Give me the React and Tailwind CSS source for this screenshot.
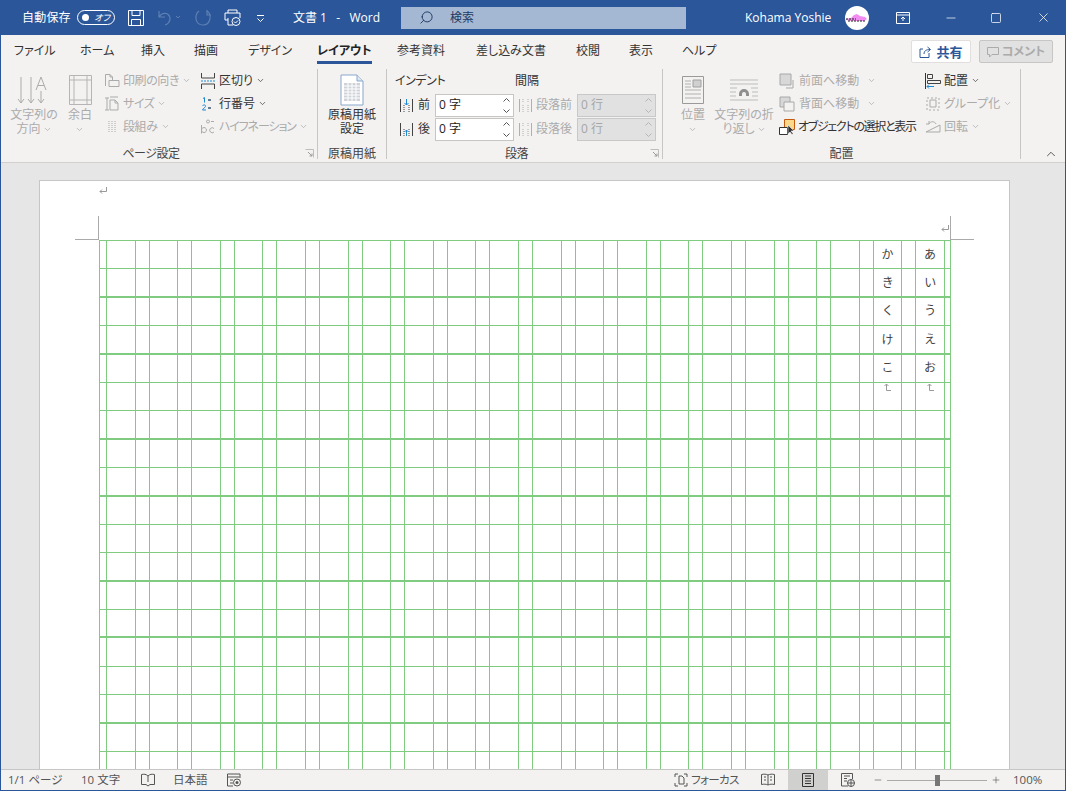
import React from "react";
import { ChevronDown, ChevronUp, Minus, Plus, Search, Square, X } from "lucide-react";

const FONT = "font-['Open_Sans','Noto_Sans_CJK_JP',sans-serif] [font-feature-settings:'palt']";
const THICK_ROWS = [2, 4, 7, 9, 12, 14, 17];
const CHARS = { "37:0": "か", "37:1": "き", "37:2": "く", "37:3": "け", "37:4": "こ", "39:0": "あ", "39:1": "い", "39:2": "う", "39:3": "え", "39:4": "お" };
const TABS = [
  { label: "ファイル", w: "w-[79px]", cls: "pl-[13px]" },
  { label: "ホーム", w: "w-[61px]", cls: "" },
  { label: "挿入", w: "w-[53px]", cls: "" },
  { label: "描画", w: "w-[54px]", cls: "" },
  { label: "デザイン", w: "w-[69px]", cls: "" },
  { label: "レイアウト", w: "w-[80px]", cls: "", active: true },
  { label: "参考資料", w: "w-[79px]", cls: "" },
  { label: "差し込み文書", w: "w-[100px]", cls: "" },
  { label: "校閲", w: "w-[53px]", cls: "" },
  { label: "表示", w: "w-[53px]", cls: "" },
  { label: "ヘルプ", w: "w-[60px]", cls: "" },
];

function Caret({ dim }) {
  return <ChevronDown className={`w-[9px] h-[9px] shrink-0 ${dim ? "text-[#ababab]" : "text-[#444]"}`} strokeWidth={2} />;
}

function Ic({ children, w = 16, h = 16, cls = "" }) {
  return <svg width={w} height={h} viewBox={`0 0 ${w} ${h}`} fill="none" className={`shrink-0 ${cls}`}>{children}</svg>;
}

function SmallBtn({ icon, label, dim, caret = true, gap = "gap-[4px]", cls = "", track = "" }) {
  return (
    <div className={`h-[23px] flex items-center ${gap} ${cls}`}>
      {icon}
      <span className={`whitespace-nowrap ${track} ${dim ? "text-[#ababab]" : "text-[#333]"}`}>{label}</span>
      {caret && <Caret dim={dim} />}
    </div>
  );
}

function BigBtn({ icon, lines, w, caretLine, dim = true, cls = "" }) {
  return (
    <div className={`flex flex-col items-center shrink-0 pt-[3px] ${w} ${cls}`}>
      <div className="h-[36px] flex items-center justify-center">{icon}</div>
      <div className={`text-center leading-[14px] ${dim ? "text-[#ababab]" : "text-[#333]"}`}>
        {lines.map((l, i) => (
          <div key={i} className="flex items-center justify-center gap-[2px] h-[14px] whitespace-nowrap">
            {l}{caretLine === i && <Caret dim={dim} />}
          </div>
        ))}
      </div>
    </div>
  );
}

function Launcher() {
  return (
    <Ic w={9} h={9}>
      <path d="M.5 .5h8v8" stroke="#bdbdbd" /><path d="M3 3l4 4M7 4.500V7H4.500" stroke="#9a9a9a" />
    </Ic>
  );
}

function Group({ w, label, children, launcher }) {
  return (
    <div className={`relative shrink-0 h-[90px] mt-[1px] flex flex-col border-r border-[#c8c6c4] ${w}`}>
      <div className="flex h-[76px] shrink-0">{children}</div>
      <div className={`flex items-center h-[17px] shrink-0 text-[#444] ${launcher ? "pr-[16px] tracking-[-0.5px]" : ""}`}>
        <span className="flex-1 text-center">{label}</span>
        {launcher && <div className="absolute right-[3px] bottom-[1px]"><Launcher /></div>}
      </div>
    </div>
  );
}

function Spin({ value, unit, dim }) {
  const c = dim ? "#b5b5b5" : "#555";
  return (
    <div className={`w-[79px] h-[23px] shrink-0 border flex items-center justify-between pl-[2px] pr-[3px] ${dim ? "bg-[#e1e1e1] border-[#c8c8c8] text-[#a6a6a6]" : "bg-white border-[#c8c6c4] text-[#222]"}`}>
      <span className="pl-[1px]">{value}&nbsp;{unit}</span>
      <Ic w={7} h={17}>
        <path d="M.5 4.500l3-3 3 3M.5 12.500l3 3 3-3" stroke={c} />
      </Ic>
    </div>
  );
}

function IndentIcon({ flip, dim }) {
  const c = dim ? "#b0b0b0" : "#444";
  const a = dim ? "#b0b0b0" : "#1e88d2";
  return (
    <Ic w={15} h={15}>
      <path d="M1.500 1v13M13.500 1v13" stroke={c} />
      {dim ? (
        <path d="M5 7v7M10 7v7M5 1v3M10 1v3" stroke={c} strokeDasharray="1 1" />
      ) : (
        <>
          <path d="M5 7v7M10 7v7" stroke={c} strokeDasharray="1 1" />
          {flip ? <path d="M7.500 14V8M5.500 10l2-2 2 2" stroke={a} /> : <path d="M7.500 1v6M5.500 5l2 2 2-2" stroke={a} />}
        </>
      )}
    </Ic>
  );
}

function TitleBar() {
  return (
    <div className="h-[35px] bg-[#2b579a] flex items-center text-white shrink-0">
      <span className="ml-[21px] w-[48px] whitespace-nowrap tracking-[0.2px]">自動保存</span>
      <div className="ml-[7px] w-[38px] h-[15px] rounded-full border border-white flex items-center justify-between pl-[4px] pr-[4px]">
        <span className="w-[7px] h-[7px] rounded-full bg-white" />
        <span className="text-[9px] leading-none italic">オフ</span>
      </div>
      <Ic w={16} h={16} cls="ml-[13px]">
        <path d="M.5 .5h15v15H.5zM4 .5v5h8v-5M3.500 15.500v-6h9v6" stroke="white" />
      </Ic>
      <Ic w={24} h={16} cls="ml-[13px] opacity-40">
        <path d="M2 1v6h6M2 7c3-5 10-5 11 1 .5 4-3 6.500-5 7" stroke="#a9bcd8" strokeWidth="1.2" />
        <path d="M19 6l2 2 2-2" stroke="#a9bcd8" />
      </Ic>
      <Ic w={18} h={17} cls="ml-[13px] opacity-40">
        <path d="M13 2c5 3 4 14-4 14S0 6 5 2M13 1v5h4" stroke="#a9bcd8" strokeWidth="1.2" />
      </Ic>
      <Ic w={17} h={17} cls="ml-[12px]">
        <path d="M4 4V1h9v3M4 11H1V4h15v5M4 9v7h5" stroke="white" />
        <circle cx="12" cy="12.500" r="4" fill="#2b579a" stroke="white" />
        <path d="M10 12.500l1.500 1.500 2.500-2.500" stroke="white" />
      </Ic>
      <Ic w={9} h={8} cls="ml-[15px]">
        <path d="M1 1.500h7M1.500 4.500l3 3 3-3" stroke="white" />
      </Ic>
      <span className="ml-[28px] w-[100px] whitespace-nowrap">文書 1&nbsp;&nbsp; -&nbsp;&nbsp; Word</span>
      <div className="ml-[8px] w-[285px] h-[22px] bg-[#a4b8d3] flex items-center text-[#1f3a63]">
        <Search className="ml-[18px] w-[15px] h-[15px] -scale-x-100 text-[#1f3a63]" strokeWidth={1.5} />
        <span className="ml-[16px]">検索</span>
      </div>
      <span className="ml-[59px] w-[100px] whitespace-nowrap">Kohama Yoshie</span>
      <div className="w-[24px] h-[24px] rounded-full bg-white flex items-center justify-center">
        <Ic w={24} h={10}>
          <path d="M1 6l5-1 3-3 3-1 3 2 5 1 2 2-3 2H6L1 7z" fill="#f28cf0" />
          <path d="M1 6h10M3 8h18" stroke="#222" strokeDasharray="2 1" />
        </Ic>
      </div>
      <Ic w={14} h={12} cls="ml-[27px]">
        <path d="M.5 .5h13v11H.5zM.5 3h13M7 9V5M5 7l2-2 2 2" stroke="white" />
      </Ic>
      <Minus className="ml-[34px] w-[14px] h-[14px]" strokeWidth={1.2} />
      <Square className="ml-[32px] w-[12px] h-[12px]" strokeWidth={1.5} />
      <X className="ml-[34px] w-[15px] h-[15px]" strokeWidth={1.2} />
    </div>
  );
}

function TabRow() {
  return (
    <div className="h-[33px] flex items-center shrink-0">
      {TABS.map((t) => (
        <div key={t.label} className={`${t.w} ${t.cls} h-full flex items-center pb-[2px] shrink-0`}>
          <span className={`relative whitespace-nowrap ${t.active ? "font-bold text-[#222]" : "text-[#333]"}`}>
            {t.label}
            {t.active && <span className="absolute left-0 right-0 top-[18px] h-[3px] bg-[#2b579a]" />}
          </span>
        </div>
      ))}
      <div className="ml-[169px] w-[60px] h-[23px] shrink-0 bg-white border border-[#e1dfdd] rounded-[2px] flex items-center justify-center gap-[5px]">
        <Ic w={12} h={12}>
          <path d="M10 7v4.500H1V3h3M5 8c0-3 2-4.500 6-4.500M8.500 1l3 2.500-3 2.500" stroke="#2b579a" />
        </Ic>
        <span className="font-bold text-[#2b579a] text-[13px]">共有</span>
      </div>
      <div className="ml-[8px] w-[74px] h-[23px] shrink-0 bg-[#e1e1e1] border border-[#c8c6c4] rounded-[2px] flex items-center justify-center gap-[3px] text-[#ababab]">
        <Ic w={12} h={12}>
          <path d="M.5 1.500h11v7H5L2.500 11V8.500H.5z" stroke="#ababab" />
        </Ic>
        <span className="font-bold">コメント</span>
      </div>
    </div>
  );
}

function Ribbon() {
  const g = "#ababab";
  return (
    <div className="h-[95px] flex shrink-0 border-b border-[#d2d0ce] relative">
      <Group w="w-[317px]" label="ページ設定" launcher>
        <BigBtn w="w-[46px]" cls="ml-[10px]" lines={["文字列の", "方向"]} caretLine={1} icon={
          <Ic w={34} h={30}>
            <path d="M4 2v26M1 24l3 4 3-4M14 2v26M11 24l3 4 3-4M24 16v12M21 24l3 4 3-4" stroke={g} />
            <path d="M19 15l5-13 5 13M21 10.500h6" stroke={g} />
          </Ic>
        } />
        <BigBtn w="w-[26px]" cls="ml-[10px]" lines={["余白", ""]} caretLine={1} icon={
          <Ic w={23} h={30}>
            <path d="M.5 .5h22v29H.5zM5 .5v29M18 .5v29M.5 5h22M.5 25h22" stroke="#b5b5b5" />
          </Ic>
        } />
        <div className="ml-[11px] w-[96px] shrink-0 flex flex-col">
          <SmallBtn dim gap="gap-[3px]" track="tracking-[-0.4px]" label="印刷の向き" icon={<Ic><path d="M1.500 13V1.500H6L8.500 4v3M6 1.500V4h2.500M5 7.500h10v6H5z" stroke={g} /></Ic>} />
          <SmallBtn dim gap="gap-[3px]" track="tracking-[-0.4px]" label="サイズ" icon={<Ic><path d="M1 2h4M3 2v12M1 14h4M6 14V4h5l3 3v7zM11 4v3h3M6 1h8" stroke={g} /></Ic>} />
          <SmallBtn dim gap="gap-[3px]" track="tracking-[-0.4px]" label="段組み" icon={<Ic><path d="M5 2v11M8 2v11M11 2v11" stroke={g} strokeDasharray="1 1" /></Ic>} />
        </div>
        <div className="flex flex-col shrink-0">
          <SmallBtn gap="gap-[3px]" label="区切り" icon={
            <Ic>
              <path d="M1.500 0v5h13V0M1.500 16v-5h13v5" stroke="#444" />
              <path d="M1 8h14" stroke="#1e88d2" strokeDasharray="2 1" />
            </Ic>
          } />
          <SmallBtn gap="gap-[3px]" label="行番号" icon={
            <Ic>
              <path d="M3 2.500l1.500-1v5M8 4h3M2.500 10c.5-1.500 3.500-1.500 3 .5-.3 1-3 2.500-3 3.500h3.500M8 12h3" stroke="#1e88d2" />
              <path d="M8 4h3M8 12h3" stroke="#444" />
            </Ic>
          } />
          <SmallBtn dim gap="gap-[3px]" track="tracking-[-1.1px]" label="ハイフネーション" icon={
            <Ic>
              <circle cx="8" cy="2.500" r="1.500" stroke={g} />
              <path d="M11 2.500h3M1.500 6v8.500M1.500 11a2.500 2.500 0 1 1 0 .1M14 9.500a2.500 2.500 0 1 0 0 3.500" stroke={g} />
            </Ic>
          } />
        </div>
      </Group>

      <Group w="w-[69px]" label="原稿用紙">
        <BigBtn w="w-full" dim={false} lines={["原稿用紙", "設定"]} icon={
          <Ic w={24} h={32}>
            <path d="M1 1h16l6 6v24H1z" fill="#fff" stroke="#8aa7cc" />
            <path d="M17 1v6h6" fill="#dce6f2" stroke="#8aa7cc" />
            <path d="M4 9h16v18H4z" fill="#cfd3d8" />
            <path d="M4 12h16M4 15h16M4 18h16M4 21h16M4 24h16M8 9v18M12 9v18M16 9v18" stroke="#fff" />
          </Ic>
        } />
      </Group>

      <Group w="w-[276px]" label="段落" launcher>
        <div className="pl-[8px] flex flex-col w-full">
          <div className="h-[24px] flex items-center">
            <span className="w-[120px] text-[#333] tracking-[-0.4px]">インデント</span>
            <span className="text-[#333]">間隔</span>
          </div>
          <div className="flex items-center h-[24px] pl-[4px]">
            <IndentIcon />
            <span className="ml-[4px] w-[17px] text-[#333]">前</span>
            <Spin value="0" unit="字" />
            <span className="ml-[4px]"><IndentIcon dim /></span>
            <span className="ml-[3px] w-[41px] text-[#ababab] whitespace-nowrap">段落前</span>
            <Spin dim value="0" unit="行" />
          </div>
          <div className="flex items-center h-[24px] pl-[4px]">
            <IndentIcon flip />
            <span className="ml-[4px] w-[17px] text-[#333]">後</span>
            <Spin value="0" unit="字" />
            <span className="ml-[4px]"><IndentIcon dim flip /></span>
            <span className="ml-[3px] w-[41px] text-[#ababab] whitespace-nowrap">段落後</span>
            <Spin dim value="0" unit="行" />
          </div>
        </div>
      </Group>

      <Group w="w-[358px]" label="配置">
        <BigBtn w="w-[26px]" cls="ml-[17px]" lines={["位置", ""]} caretLine={1} icon={
          <Ic w={22} h={28}>
            <path d="M.5 .5h21v27H.5z" stroke="#9a9a9a" />
            <path d="M11 4h8v7h-8z" fill="#d0d0d0" stroke="#a0a0a0" />
            <path d="M3 5h6M3 8h6M3 11h6M3 14h16M3 18h16M3 22h16" stroke="#b0b0b0" />
          </Ic>
        } />
        <BigBtn w="w-[58px]" cls="ml-[9px]" lines={["文字列の折", "り返し"]} caretLine={1} icon={
          <Ic w={30} h={22}>
            <path d="M1 1h28M1 5h28M1 9h7M22 9h7M1 13h6M23 13h6M1 17h6M23 17h6M1 21h28" stroke="#bdbdbd" />
            <path d="M10 17v-2a5 5 0 0 1 10 0v2h-3v-2a2 2 0 0 0-4 0v2z" fill="#8f8f8f" />
          </Ic>
        } />
        <div className="ml-[6px] w-[146px] shrink-0 flex flex-col">
          <div className="flex items-center h-[23px]">
            <SmallBtn dim caret={false} gap="gap-[4px]" label="前面へ移動" icon={
              <Ic><path d="M1 1h11v11H1z" fill="#d8d8d8" stroke="#a8a8a8" /><path d="M14 7v8H7" stroke="#a8a8a8" /></Ic>
            } />
            <span className="ml-[8px]"><Caret dim /></span>
          </div>
          <div className="flex items-center h-[23px]">
            <SmallBtn dim caret={false} gap="gap-[4px]" label="背面へ移動" icon={
              <Ic><path d="M1 1h10v10H1z" fill="#d8d8d8" stroke="#a8a8a8" /><path d="M5 6h10v9H5z" fill="#f3f2f1" stroke="#a8a8a8" /></Ic>
            } />
            <span className="ml-[8px]"><Caret dim /></span>
          </div>
          <SmallBtn caret={false} gap="gap-[3px]" track="tracking-[-1.3px]" label="オブジェクトの選択と表示" icon={
            <Ic>
              <path d="M5.500 .5h10v10h-10z" fill="#fbd88a" stroke="#c55a11" />
              <path d="M.5 8.500h8v7h-8z" fill="#fff" stroke="#333" />
              <path d="M9 6v9l2-2 2 2.500 1-1-2-2.500h3z" fill="#333" stroke="#fff" strokeWidth=".5" />
            </Ic>
          } />
        </div>
        <div className="flex flex-col shrink-0">
          <SmallBtn gap="gap-[3px]" label="配置" icon={
            <Ic><path d="M.5 0v16" stroke="#333" /><path d="M2.500 1.500h5v4h-5zM2.500 7.500h13v3h-13z" fill="#f3f2f1" stroke="#444" /><path d="M2 13.500h7M4 11.500l-2 2 2 2" stroke="#1e88d2" /></Ic>
          } />
          <SmallBtn dim gap="gap-[3px]" label="グループ化" icon={
            <Ic><path d="M2 2h12v12H2z" stroke={g} strokeDasharray="2 2" /><path d="M5 4h6v7H5z" stroke={g} /></Ic>
          } />
          <SmallBtn dim gap="gap-[3px]" label="回転" icon={
            <Ic><path d="M1 13l14-7v7zM4 5c1-3 6-3 7 0M1 5h3V2" stroke={g} /></Ic>
          } />
        </div>
      </Group>
      <div className="flex-1 flex items-end justify-end pr-[7px] pb-[1px]">
        <ChevronUp className="w-[14px] h-[14px] text-[#444]" strokeWidth={1.5} />
      </div>
    </div>
  );
}

function ReturnMark({ cls = "" }) {
  return (
    <Ic w={8} h={8} cls={cls}>
      <path d="M7.500 0v4.500H1M3 2.500l-2 2 2 2" stroke="#999" />
    </Ic>
  );
}

function SheetGrid() {
  const rows = Array.from({ length: 20 }, (_, r) => r);
  const cols = Array.from({ length: 41 }, (_, c) => c);
  return (
    <div className="grid ml-[59px] w-[852px] grid-cols-[7px_repeat(19,28.6px_14px)_28.6px_6.4px] auto-rows-[28.4px] border-r border-[#7fcb7f]">
      {rows.map((r) =>
        cols.map((c) => {
          const ch = CHARS[`${c}:${r}`];
          const endMark = r === 5 && (c === 37 || c === 39);
          return (
            <div key={`${r}-${c}`} className={`border-l border-[#7fcb7f] flex justify-center items-center text-[12px] text-[#444] ${THICK_ROWS.includes(r) ? "border-t-2 -mt-[1px]" : "border-t"}`}>
              {ch}
              {endMark && <ReturnMark cls="rotate-90 self-start" />}
            </div>
          );
        })
      )}
    </div>
  );
}

function Document() {
  return (
    <div className="flex-1 bg-[#e6e6e6] overflow-hidden pt-[17px] pl-[38px]">
      <div className="w-[971px] bg-white border-t border-l border-r border-[#c6c6c6]">
        <div className="h-[35px] pl-[59px] pt-[6px]"><ReturnMark /></div>
        <div className="h-[24px] flex">
          <div className="ml-[35px] w-[24px] border-r border-b border-[#aaa]" />
          <div className="flex-1 flex justify-end items-center pr-[1px]"><ReturnMark cls="mt-[2px]" /></div>
          <div className="mr-[35px] w-[24px] border-l border-b border-[#aaa]" />
        </div>
        <SheetGrid />
      </div>
    </div>
  );
}

function StatusBar() {
  const c = "#555";
  return (
    <div className="h-[21px] bg-[#f3f2f1] border-t border-[#c6c6c6] flex items-center text-[#555] shrink-0 text-[11.5px]">
      <span className="ml-[7px] w-[73px] whitespace-nowrap">1/1 ページ</span>
      <span className="w-[60px] whitespace-nowrap">10 文字</span>
      <Ic w={14} h={14}>
        <path d="M7 3C5 1 3 1 .5 1.500v10H5L7 13l2-1.500h4.500v-10C11 1 9 1 7 3zM7 3v6" stroke={c} />
      </Ic>
      <span className="ml-[18px] w-[54px] whitespace-nowrap">日本語</span>
      <Ic w={14} h={14}>
        <path d="M13 5V1H.5v12H6M.5 4h12M3 7h3M3 10h3" stroke={c} />
        <circle cx="10" cy="9.500" r="3.500" stroke={c} /><circle cx="10" cy="9.500" r="1.500" fill={c} />
      </Ic>
      <div className="ml-[433px] flex items-center gap-[3px] w-[70px] shrink-0">
        <Ic w={14} h={14}>
          <path d="M1 4V1h3M10 1h3v3M13 10v3h-3M4 13H1v-3M5 3h3l2 2v6H5z" stroke={c} />
        </Ic>
        <span className="whitespace-nowrap tracking-[-0.6px]">フォーカス</span>
      </div>
      <Ic w={14} h={14} cls="ml-[17px]">
        <path d="M7 2C5 1 3 1 .5 1.500v10C3 11 5 11 7 12c2-1 4-1 6.500-.5v-10C11 1 9 1 7 2zM7 2v10M3 4h2M3 7h2M9 4h2M9 7h2" stroke={c} />
      </Ic>
      <div className="ml-[13px] w-[40px] h-[20px] bg-[#d0d0cf] flex items-center justify-center">
        <Ic w={12} h={14}>
          <path d="M.5 .5h11v13H.5zM3 3h6M3 5.500h6M3 8h6M3 10.500h6" stroke="#333" />
        </Ic>
      </div>
      <Ic w={14} h={14} cls="ml-[13px]">
        <path d="M7 13H.5V.5h11V6M3 3h6M3 5.500h3M3 8h3" stroke={c} />
        <circle cx="10" cy="10" r="3.500" stroke={c} /><path d="M6.500 10h7M10 6.500v7" stroke={c} />
      </Ic>
      <Minus className="ml-[18px] w-[10px] h-[10px]" strokeWidth={1.5} />
      <div className="ml-[4px] w-[100px] h-[1px] bg-[#aaa] flex items-center justify-center">
        <span className="w-[5px] h-[11px] bg-[#777]" />
      </div>
      <Plus className="ml-[4px] w-[10px] h-[10px]" strokeWidth={1.5} />
      <span className="ml-[12px] whitespace-nowrap">100%</span>
    </div>
  );
}

export default function App() {
  return (
    <div className={`${FONT} w-[1066px] h-[791px] flex flex-col overflow-hidden bg-[#f3f2f1] border-x border-b border-[#2b579a] text-[12px] leading-[16px]`}>
      <TitleBar />
      <TabRow />
      <Ribbon />
      <Document />
      <StatusBar />
    </div>
  );
}
